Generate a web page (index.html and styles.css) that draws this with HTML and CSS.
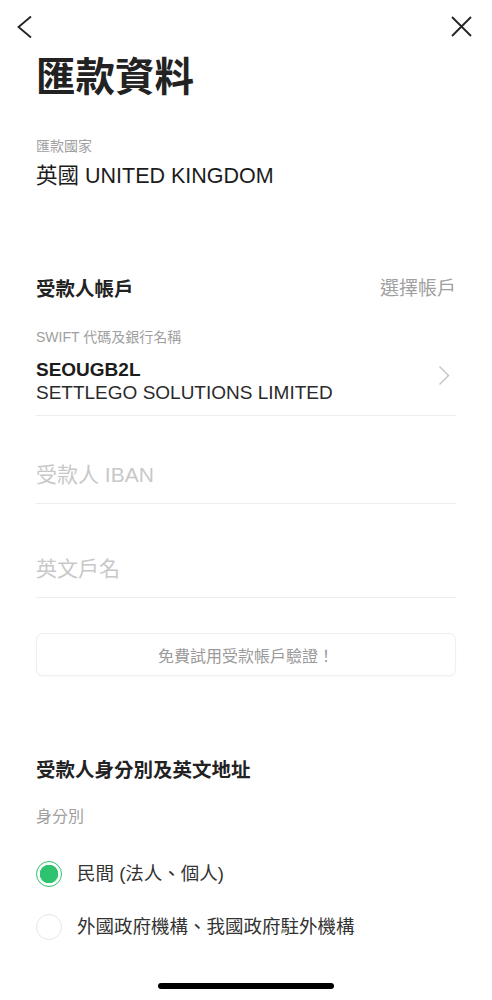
FILE: index.html
```html
<!DOCTYPE html>
<html lang="zh-Hant">
<head>
  <meta charset="UTF-8" />
  <meta name="viewport" content="width=device-width, initial-scale=1.0" />
  <title>匯款資料</title>
  <link rel="stylesheet" href="styles.css">
</head>
<body>
  <div class="topbar">
    <svg class="icon" viewBox="0 0 28 28" width="28" height="28">
      <polyline points="19,3.5 6.5,14 19,24.5" fill="none" stroke="#222" stroke-width="1.8" />
    </svg>
    <svg class="icon" viewBox="0 0 28 28" width="28" height="28">
      <path d="M6 4 L25 23 M25 4 L6 23" fill="none" stroke="#222" stroke-width="1.8" />
    </svg>
  </div>

  <main class="content">
    <h1 class="title">匯款資料</h1>

    <div class="label country-label">匯款國家</div>
    <div class="value">英國 UNITED KINGDOM</div>

    <div class="section-head">
      <h2 class="section-title">受款人帳戶</h2>
      <span class="section-link">選擇帳戶</span>
    </div>

    <div class="label swift-label">SWIFT 代碼及銀行名稱</div>
    <div class="bank-row">
      <div class="bank-text">
        <div class="bank-code">SEOUGB2L</div>
        <div class="bank-name">SETTLEGO SOLUTIONS LIMITED</div>
      </div>
      <svg class="chevron" viewBox="0 0 12 22" width="12" height="22">
        <polyline points="1.5,1.5 10.5,10.5 1.5,19.5" fill="none" stroke="#c8c8c8" stroke-width="1.5" />
      </svg>
    </div>

    <div class="field">受款人 IBAN</div>
    <div class="field">英文戶名</div>

    <button class="verify-btn">免費試用受款帳戶驗證！</button>

    <h2 class="section-title id-title">受款人身分別及英文地址</h2>
    <div class="label id-label">身分別</div>

    <div class="radio-row">
      <span class="radio checked"></span>
      <span class="radio-text">民間 (法人、個人)</span>
    </div>
    <div class="radio-row second">
      <span class="radio"></span>
      <span class="radio-text">外國政府機構、我國政府駐外機構</span>
    </div>
  </main>

  <div class="home-bar"></div>
</body>
</html>
```

FILE: styles.css
```css
body {
  margin: 0;
  background: #fff;
  color: #222;
  font-family: "Liberation Sans", "Noto Sans CJK TC", sans-serif;
}

.topbar {
  height: 54px;
  display: flex;
  justify-content: space-between;
  align-items: center;
  padding: 0 18px 0 12px;
}
.icon {
  display: block;
}

.content {
  padding: 0 36px;
}

.title {
  margin: 0;
  font-size: 39.5px;
  line-height: 46px;
  font-weight: 700;
  color: #222;
}

.label {
  font-size: 14px;
  line-height: 20px;
  color: #a0a0a0;
}
.country-label {
  margin-top: 36px;
}
.value {
  margin-top: 6px;
  font-size: 21.5px;
  line-height: 28px;
  color: #1c1c1c;
}

.section-head {
  margin-top: 85px;
  display: flex;
  justify-content: space-between;
  align-items: center;
}
.section-title {
  margin: 0;
  font-size: 19.5px;
  line-height: 28px;
  font-weight: 700;
  color: #222;
}
.section-link {
  font-size: 19px;
  line-height: 28px;
  color: #a0a0a0;
}

.swift-label {
  margin-top: 24px;
}
.bank-row {
  margin-top: 11px;
  padding-bottom: 11px;
  border-bottom: 1px solid #ededed;
  display: flex;
  justify-content: space-between;
  align-items: flex-start;
}
.bank-code {
  font-size: 19px;
  line-height: 23px;
  font-weight: 700;
  color: #1c1c1c;
}
.bank-name {
  font-size: 19px;
  line-height: 23px;
  color: #2a2a2a;
}
.chevron {
  display: block;
  margin: 7px 6px 0 0;
}

.field {
  padding: 45px 0 14px;
  border-bottom: 1px solid #ededed;
  font-size: 21px;
  line-height: 28px;
  color: #c8c8c8;
}
.field + .field {
  padding-top: 51px;
}

.verify-btn {
  display: block;
  width: 100%;
  margin-top: 35px;
  height: 43px;
  background: #fff;
  border: 1px solid #efefef;
  border-radius: 7px;
  box-shadow: 0 1px 2px rgba(0, 0, 0, 0.03);
  font-family: inherit;
  font-size: 16px;
  color: #9a9a9a;
}

.id-title {
  margin-top: 80px;
}
.id-label {
  margin-top: 22px;
  font-size: 16px;
  line-height: 22px;
}

.radio-row {
  margin-top: 26px;
  height: 40px;
  display: flex;
  align-items: center;
  gap: 15px;
}
.radio-row.second {
  margin-top: 13px;
}
.radio {
  box-sizing: border-box;
  width: 26px;
  height: 26px;
  border-radius: 50%;
  border: 1px solid #e6e6e6;
  flex-shrink: 0;
}
.radio.checked {
  border: 1.5px solid #2ec36f;
  background: radial-gradient(circle, #2ec36f 0, #2ec36f 9px, #fff 9.5px);
}
.radio-text {
  font-size: 18.5px;
  line-height: 26px;
  color: #333;
}

.home-bar {
  position: fixed;
  left: 158px;
  bottom: 11px;
  width: 176px;
  height: 6px;
  border-radius: 3px;
  background: #000;
}
```
